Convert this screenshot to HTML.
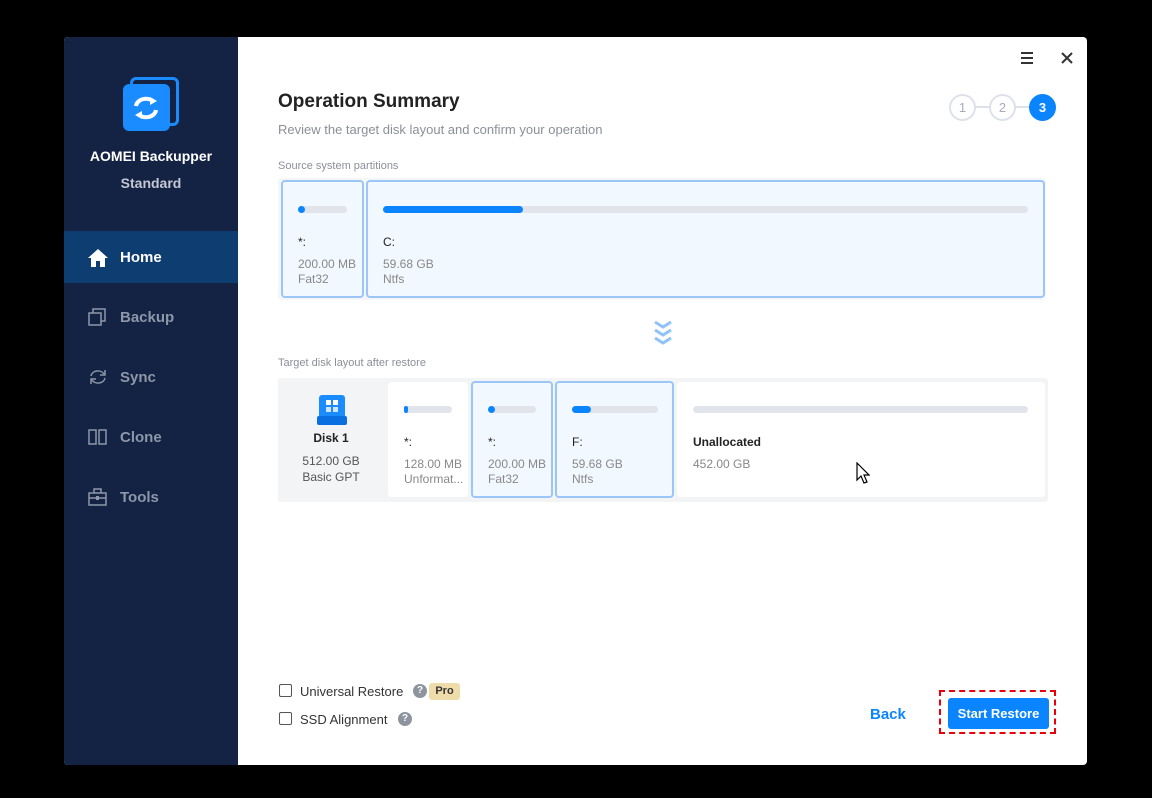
<!DOCTYPE html>
<html><head><style>
*{margin:0;padding:0;box-sizing:border-box}
body{width:1152px;height:798px;background:#000;font-family:"Liberation Sans",sans-serif;position:relative;overflow:hidden}
.win{position:absolute;left:64px;top:37px;width:1023px;height:728px;background:#fff;border-radius:4px;overflow:hidden}
.side{position:absolute;left:0;top:0;width:174px;height:728px;background:#142244}
.abs{position:absolute}
.nav{position:absolute;left:0;width:174px;height:52px;color:#8d97a9;font-size:15px;font-weight:bold}
.nav span{position:absolute;left:56px;top:18px}
.nav svg{position:absolute;left:24px;top:17px}
.card{position:absolute;border:2px solid #9cc6f7;background:#f2f8ff;border-radius:4px}
.card.w{border:none;background:#fff}
.bar{position:absolute;height:7px;background:#e1e4ea;border-radius:4px}
.bar i{position:absolute;left:0;top:0;height:7px;background:#0a84ff;border-radius:4px}
.t1{position:absolute;font-size:12px;color:#222}
.t2{position:absolute;font-size:12px;color:#888;line-height:15px}
.cb{position:absolute;width:13px;height:13px;border:1.5px solid #555;border-radius:2px}
.q{position:absolute;width:14px;height:14px;border-radius:50%;background:#8e949e;color:#fff;font-size:10px;font-weight:bold;text-align:center;line-height:14px}
.step{position:absolute;width:27px;height:27px;border-radius:50%;border:2px solid #dde2ea;color:#aab;font-size:13px;text-align:center;line-height:23px}
</style></head><body>
<div class="win">
<div class="side">
 <div class="abs" style="left:66px;top:40px;width:49px;height:49px;border:3px solid #1a8cff;border-radius:6px"></div>
 <div class="abs" style="left:59px;top:47px;width:47px;height:47px;background:#1a8cff;border-radius:6px"></div>
 <svg class="abs" style="left:67px;top:57px" width="30" height="28" viewBox="0 0 30 28"><path d="M5 12a10 8 0 0 1 18-4" stroke="#fff" stroke-width="4" fill="none"/><path d="M19 3l7 4-7 4z" fill="#fff"/><path d="M25 16a10 8 0 0 1-18 4" stroke="#fff" stroke-width="4" fill="none"/><path d="M11 25l-7-4 7-4z" fill="#fff"/></svg>
 <div class="abs" style="left:0;width:174px;top:111px;text-align:center;color:#fff;font-weight:bold;font-size:14px">AOMEI Backupper</div>
 <div class="abs" style="left:0;width:174px;top:138px;text-align:center;color:#c3c8d2;font-weight:bold;font-size:14px">Standard</div>
 <div class="nav" style="top:194px;background:#0e3d72;color:#fff"><svg width="20" height="20" viewBox="0 0 20 20"><path d="M10 1L0 10h3v9h5v-6h4v6h5v-9h3z" fill="#fff"/></svg><span>Home</span></div>
 <div class="nav" style="top:254px"><svg width="18" height="18"><rect x="1" y="5" width="12" height="12" fill="none" stroke="#8d97a9" stroke-width="1.5"/><path d="M5 5V1h12v12h-4" fill="none" stroke="#8d97a9" stroke-width="1.5"/></svg><span>Backup</span></div>
 <div class="nav" style="top:314px"><svg width="20" height="18"><path d="M3 8a7 6 0 0 1 13-2M17 10a7 6 0 0 1-13 2" fill="none" stroke="#8d97a9" stroke-width="1.5"/><path d="M17 2v5h-5M3 16v-5h5" fill="none" stroke="#8d97a9" stroke-width="1.5"/></svg><span>Sync</span></div>
 <div class="nav" style="top:374px"><svg width="20" height="18"><rect x="1" y="2" width="7" height="14" fill="none" stroke="#8d97a9" stroke-width="1.5"/><rect x="11" y="2" width="7" height="14" fill="none" stroke="#8d97a9" stroke-width="1.5"/></svg><span>Clone</span></div>
 <div class="nav" style="top:434px"><svg width="20" height="18"><rect x="1" y="5" width="17" height="12" fill="none" stroke="#8d97a9" stroke-width="1.5"/><path d="M6 5V1h7v4M1 10h17" fill="none" stroke="#8d97a9" stroke-width="1.5"/><rect x="8" y="8" width="3" height="4" fill="#8d97a9"/></svg><span>Tools</span></div>
</div>
<div class="abs" style="left:957px;top:15px;width:12px;font-size:0"><div style="height:2px;background:#333;margin-bottom:3px"></div><div style="height:2px;background:#333;margin-bottom:3px"></div><div style="height:2px;background:#333"></div></div>
<svg class="abs" style="left:997px;top:15px" width="12" height="12"><path d="M1 1l10 10M11 1L1 11" stroke="#333" stroke-width="2"/></svg>
<div class="abs" style="left:900px;top:69px;width:80px;height:2px;background:#dde2ea"></div>
<div class="step" style="left:885px;top:57px;background:#fff">1</div>
<div class="step" style="left:925px;top:57px;background:#fff">2</div>
<div class="step" style="left:965px;top:57px;background:#0a84ff;border-color:#0a84ff;color:#fff;font-weight:bold">3</div>
<div class="abs" style="left:214px;top:54px;font-size:19px;font-weight:bold;color:#222">Operation Summary</div>
<div class="abs" style="left:214px;top:85px;font-size:13px;color:#8a8f98">Review the target disk layout and confirm your operation</div>
<div class="abs" style="left:214px;top:123px;font-size:11px;color:#8a8f98">Source system partitions</div>
<div class="abs" style="left:214px;top:141px;width:768px;height:122px;background:#f5f6f8;border-radius:3px"></div>
<div class="card" style="left:217px;top:143px;width:83px;height:118px"><div class="bar" style="left:15px;top:24px;width:49px"><i style="width:7px"></i></div><div class="t1" style="left:15px;top:53px">*:</div><div class="t2" style="left:15px;top:75px">200.00 MB<br>Fat32</div></div>
<div class="card" style="left:302px;top:143px;width:679px;height:118px"><div class="bar" style="left:15px;top:24px;width:645px"><i style="width:140px"></i></div><div class="t1" style="left:15px;top:53px">C:</div><div class="t2" style="left:15px;top:75px">59.68 GB<br>Ntfs</div></div>
<svg class="abs" style="left:589px;top:283px" width="20" height="28"><path d="M2 2l8 5 8-5M2 10l8 5 8-5M2 18l8 5 8-5" stroke="#8fc3f7" stroke-width="3" fill="none"/></svg>
<div class="abs" style="left:214px;top:320px;font-size:11px;color:#8a8f98">Target disk layout after restore</div>
<div class="abs" style="left:214px;top:341px;width:770px;height:124px;background:#f3f4f6;border-radius:3px"></div>
<svg class="abs" style="left:253px;top:358px" width="30" height="30"><rect x="2" y="0" width="26" height="24" rx="3" fill="#1a8cff"/><rect x="0" y="21" width="30" height="9" rx="2" fill="#0a6fe0"/><rect x="9" y="5" width="5" height="5" fill="#fff"/><rect x="16" y="5" width="5" height="5" fill="#fff"/><rect x="9" y="12" width="5" height="5" fill="#cfe4ff"/><rect x="16" y="12" width="5" height="5" fill="#cfe4ff"/></svg>
<div class="abs" style="left:222px;top:394px;width:90px;text-align:center;font-size:12px;font-weight:bold;color:#222">Disk 1</div>
<div class="abs" style="left:222px;top:416px;width:90px;text-align:center;font-size:12px;color:#555;line-height:16px">512.00 GB<br>Basic GPT</div>
<div class="card w" style="left:324px;top:345px;width:80px;height:115px"><div class="bar" style="left:16px;top:24px;width:48px"><i style="width:4px"></i></div><div class="t1" style="left:16px;top:53px">*:</div><div class="t2" style="left:16px;top:75px">128.00 MB<br>Unformat...</div></div>
<div class="card" style="left:407px;top:344px;width:82px;height:117px"><div class="bar" style="left:15px;top:23px;width:48px"><i style="width:7px"></i></div><div class="t1" style="left:15px;top:52px">*:</div><div class="t2" style="left:15px;top:74px">200.00 MB<br>Fat32</div></div>
<div class="card" style="left:491px;top:344px;width:119px;height:117px"><div class="bar" style="left:15px;top:23px;width:86px"><i style="width:19px"></i></div><div class="t1" style="left:15px;top:52px">F:</div><div class="t2" style="left:15px;top:74px">59.68 GB<br>Ntfs</div></div>
<div class="card w" style="left:613px;top:345px;width:368px;height:115px"><div class="bar" style="left:16px;top:24px;width:335px"></div><div class="t1" style="left:16px;top:53px;font-weight:bold">Unallocated</div><div class="t2" style="left:16px;top:75px">452.00 GB</div></div>
<svg class="abs" style="left:792px;top:425px" width="14" height="22"><path d="M1 1v17l4-4 3 7 3-1-3-7h5z" fill="#fff" stroke="#000" stroke-width="1.2"/></svg>
<div class="cb" style="left:215px;top:647px"></div>
<div class="abs" style="left:236px;top:647px;font-size:13px;color:#333">Universal Restore</div>
<div class="q" style="left:349px;top:647px">?</div>
<div class="abs" style="left:365px;top:646px;width:31px;height:17px;background:#eedcab;border-radius:3px;font-size:11px;font-weight:bold;color:#333;text-align:center;line-height:17px">Pro</div>
<div class="cb" style="left:215px;top:675px"></div>
<div class="abs" style="left:236px;top:675px;font-size:13px;color:#333">SSD Alignment</div>
<div class="q" style="left:334px;top:675px">?</div>
<div class="abs" style="left:806px;top:669px;font-size:15px;font-weight:bold;color:#0a84ff">Back</div>
<div class="abs" style="left:875px;top:653px;width:117px;height:44px;border:2px dashed #e8000b"></div>
<div class="abs" style="left:884px;top:661px;width:101px;height:31px;background:#0a84ff;border-radius:3px;color:#fff;font-size:13px;font-weight:bold;text-align:center;line-height:31px">Start Restore</div>
</div>
</body></html>
